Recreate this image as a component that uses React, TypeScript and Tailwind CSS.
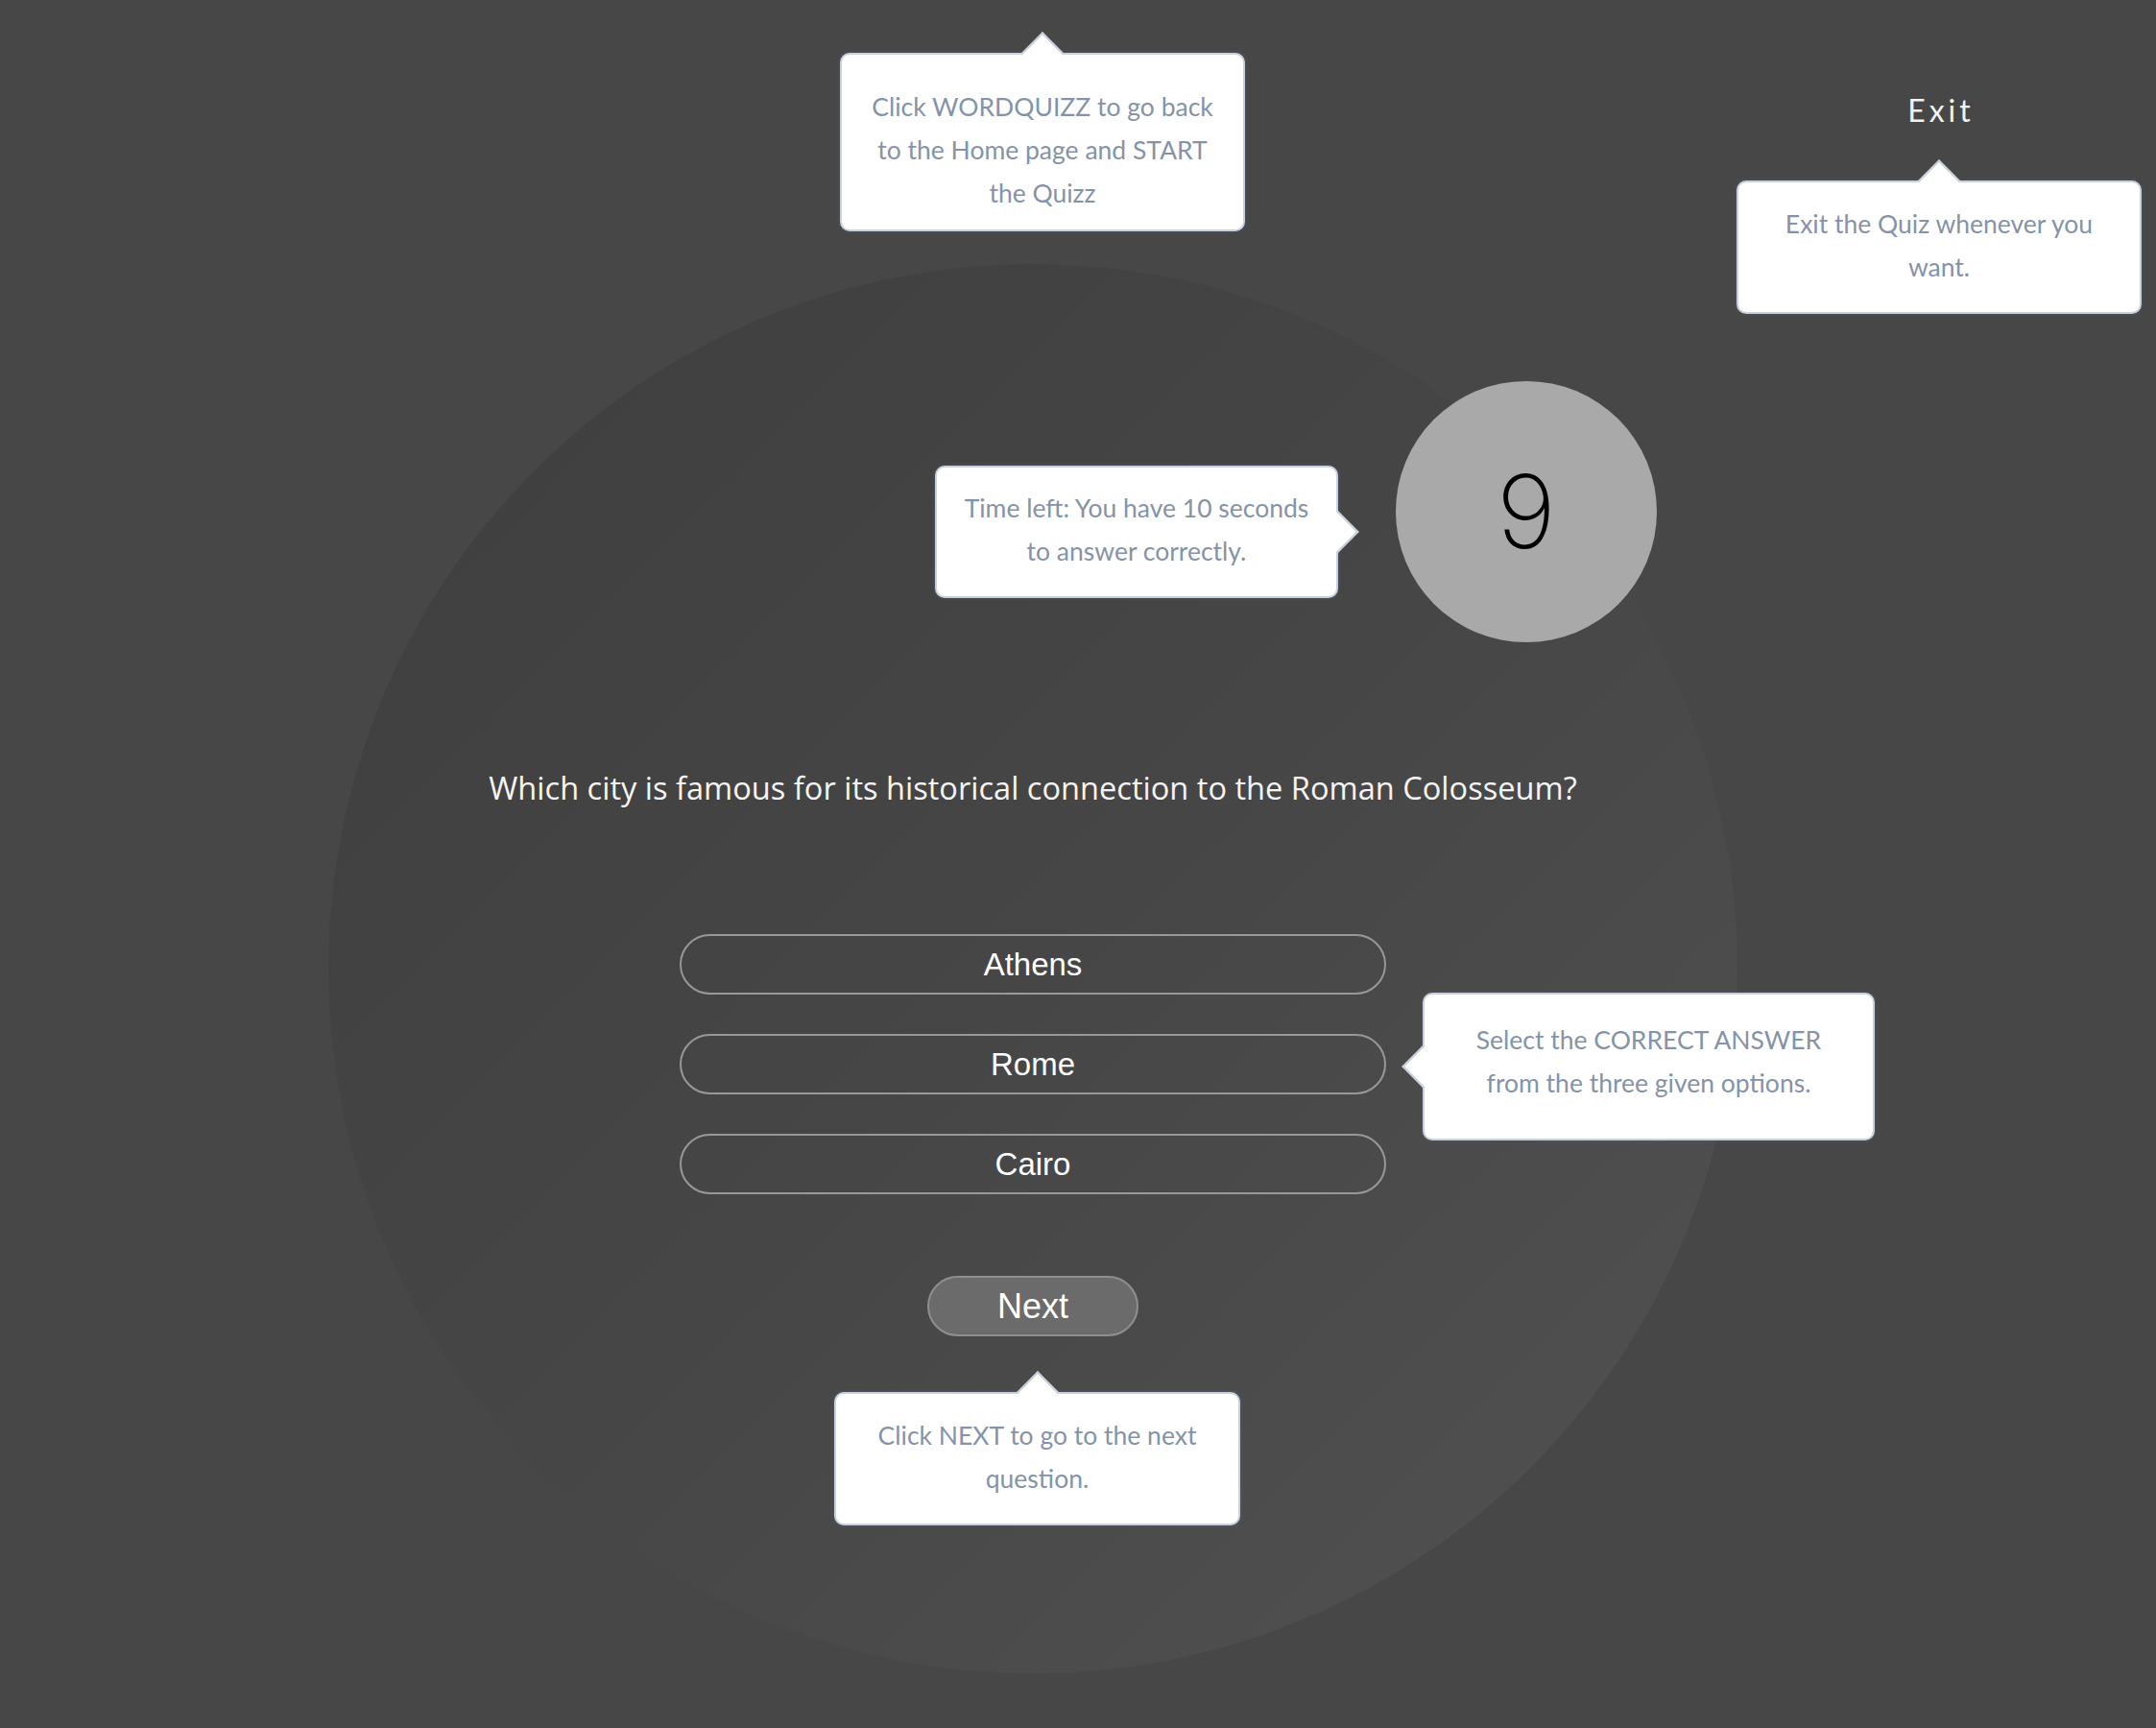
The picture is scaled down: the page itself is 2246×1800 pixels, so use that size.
import React from "react";

const tipText =
  "font-['Lato','Liberation_Sans',sans-serif] text-[26.5px] leading-[45px] text-[#8593a8] text-center";
const box =
  "bg-white rounded-[10px] border-2 border-[#c7d0dc] shadow-[0_0_4px_rgba(90,110,140,0.45)] z-10";

function ArrowTop() {
  return (
    <span className="absolute left-1/2 -top-[17px] -ml-[16px] w-[32px] h-[32px] rotate-45 bg-white border-l-2 border-t-2 border-[#c7d0dc]" />
  );
}
function ArrowLeft() {
  return (
    <span className="absolute top-1/2 -left-[17px] -mt-[16px] w-[32px] h-[32px] rotate-45 bg-white border-l-2 border-b-2 border-[#c7d0dc]" />
  );
}
function ArrowRight() {
  return (
    <span className="absolute top-1/2 -right-[17px] -mt-[16px] w-[32px] h-[32px] rotate-45 bg-white border-t-2 border-r-2 border-[#c7d0dc]" />
  );
}

export default function App() {
  const answers = ["Athens", "Rome", "Cairo"];
  return (
    <div className="relative w-full min-h-[1800px] bg-[#474747] overflow-hidden font-['Lato',sans-serif]">
      <header className="relative h-[275px] flex justify-end pr-[126px]">
        <div className={`absolute left-[875px] top-[55px] w-[422px] px-[22px] pt-[32px] pb-[15px] ${box}`}>
          <ArrowTop />
          <p className={`relative ${tipText}`}>
            Click WORDQUIZZ to go back to the Home page and START the Quizz
          </p>
        </div>
        <div className="relative w-[200px] pt-[96px] flex justify-center items-start">
          <span className="pl-[4px] text-[32px] leading-[1.2] tracking-[4px] text-[#f2f2f2] font-['Lato',sans-serif]">
            Exit
          </span>
          <div className={`absolute left-1/2 -translate-x-1/2 top-[188px] w-[422px] px-[22px] pt-[21px] pb-[24px] ${box}`}>
            <ArrowTop />
            <p className={`relative ${tipText}`}>Exit the Quiz whenever you want.</p>
          </div>
        </div>
      </header>

      <main className="ml-[342px] w-[1468px] h-[1468px] rounded-full bg-linear-to-br from-[#3e3e3e] via-[#464646] to-[#525252] flex flex-col items-center">
        <div className="w-full flex justify-end pr-[84px] pt-[122px]">
          <div className="relative w-[272px] h-[272px] rounded-full bg-[#a9a9a9] flex items-center justify-center">
            <span className="text-[106px] leading-none font-extralight text-black font-['Inter',sans-serif]">
              9
            </span>
            <div className={`absolute right-full mr-[60px] top-[88px] w-[420px] px-[18px] pt-[20px] pb-[24px] ${box}`}>
              <ArrowRight />
              <p className={`relative ${tipText}`}>
                Time left: You have 10 seconds to answer correctly.
              </p>
            </div>
          </div>
        </div>

        <h1 className="mt-[132px] text-[32.6px] leading-[40px] text-[#f4f4f4] font-['Open_Sans',sans-serif] font-normal text-center whitespace-nowrap">
          Which city is famous for its historical connection to the Roman Colosseum?
        </h1>

        <div className="mt-[132px] w-[736px] flex flex-col gap-[41px]">
          {answers.map((a) => (
            <div key={a} className="relative">
              <button className="w-full h-[63px] rounded-full border-2 border-[#989898] bg-transparent text-white text-[33px] font-['Liberation_Sans',Arial,sans-serif]">
                {a}
              </button>
              {a === "Rome" && (
                <div className={`absolute left-full ml-[38px] -top-[43px] w-[471px] px-[44px] pt-[25px] pb-[35px] ${box}`}>
                  <ArrowLeft />
                  <p className={`relative ${tipText}`}>
                    Select the CORRECT ANSWER from the three given options.
                  </p>
                </div>
              )}
            </div>
          ))}
        </div>

        <div className="relative mt-[85px]">
          <button className="w-[220px] h-[63px] rounded-full border-2 border-[#8f8f8f] bg-[#6b6b6b] text-white text-[36px] font-['Liberation_Sans',Arial,sans-serif]">
            Next
          </button>
          <div className={`absolute top-full mt-[58px] -left-[97px] w-[423px] px-[24px] pt-[21px] pb-[24px] ${box}`}>
            <ArrowTop />
            <p className={`relative ${tipText}`}>Click NEXT to go to the next question.</p>
          </div>
        </div>
      </main>
    </div>
  );
}
